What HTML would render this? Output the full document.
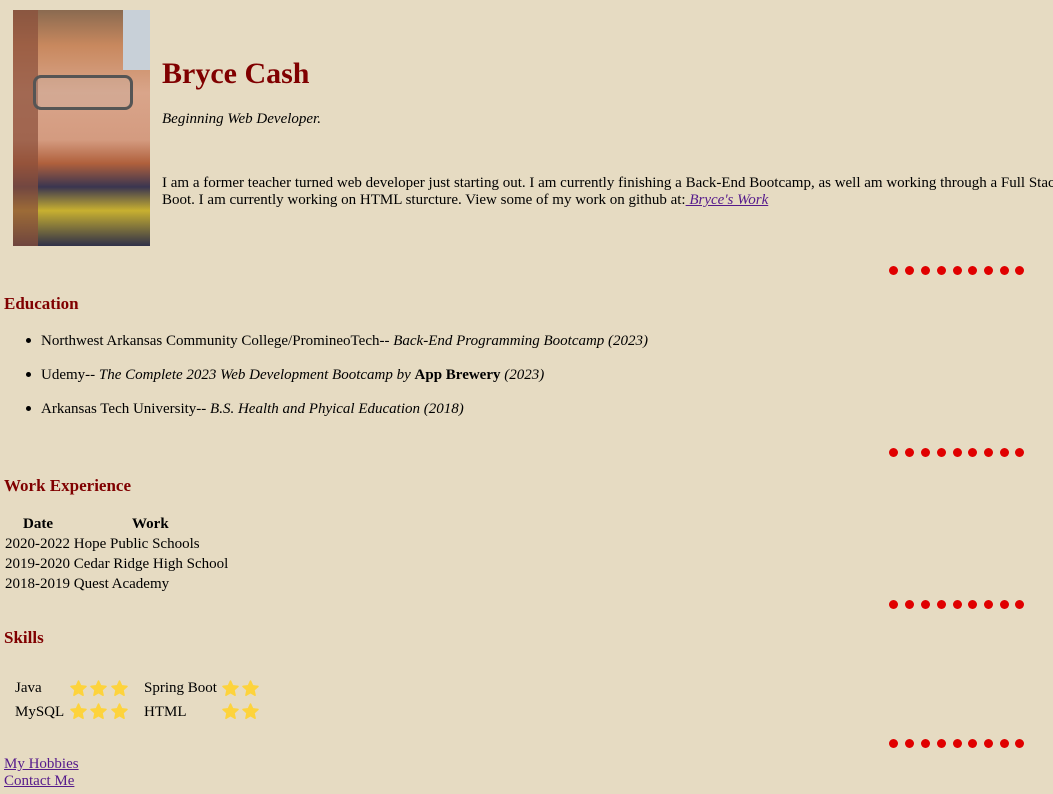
<!DOCTYPE html>
<html style="overflow:hidden"><head><style>
body{margin:0;width:1053px;height:794px;background:#e6dbc2;font-family:"Liberation Serif",serif;font-size:15px;color:#000;position:relative;overflow:hidden}
.a{position:absolute;white-space:nowrap;line-height:17px}
h1{position:absolute;margin:0;left:162px;top:56px;font-size:30px;color:#800000;font-weight:bold;line-height:36px}
h3{position:absolute;margin:0;left:4px;font-size:17px;color:#800000;font-weight:bold;line-height:20px}
.dots{position:absolute;left:889px;width:140px;height:9px}
.dots i{position:absolute;top:0;width:9px;height:9px;border-radius:50%;background:#e00000}
.bul{position:absolute;left:26px;width:5px;height:5px;border-radius:50%;background:#000}
a{color:#551a8b}
svg.s{position:absolute;width:17px;height:17px}
</style></head><body>
<svg width="0" height="0" style="position:absolute"><defs><path id="st" d="M8.5 1 L10.7 5.8 L16 6.4 L12 10 L13.1 15.3 L8.5 12.6 L3.9 15.3 L5 10 L1 6.4 L6.3 5.8 Z" fill="#fdd33c" stroke="#fdd33c" stroke-width="1.5" stroke-linejoin="round"/></defs></svg>
<div style="position:absolute;left:13px;top:10px;width:137px;height:236px;overflow:hidden;background:linear-gradient(180deg,#8a6a50 0%,#c8885e 15%,#d9a58a 35%,#d49b80 55%,#b0603c 65%,#3a3550 75%,#c8b030 85%,#303048 100%)">
<div style="position:absolute;left:0;top:0;width:25px;height:236px;background:#8a4f3a;opacity:.7"></div>
<div style="position:absolute;left:110px;top:0;width:27px;height:60px;background:#c8d0d8"></div>
<div style="position:absolute;left:20px;top:65px;width:100px;height:35px;border:3px solid #555;border-radius:8px;box-sizing:border-box;background:rgba(200,180,170,.3)"></div>
</div>
<h1>Bryce Cash</h1>
<div class="a" style="left:162px;top:111px;font-style:italic">Beginning Web Developer.</div>
<div class="a" style="left:162px;top:175px">I am a former teacher turned web developer just starting out. I am currently finishing a Back-End Bootcamp, as well am working through a Full Stack Spring</div>
<div class="a" style="left:162px;top:192px">Boot. I am currently working on HTML sturcture. View some of my work on github at:<a href="#"><i> Bryce's Work</i></a></div>

<div class="dots" style="top:266px"><i style="left:0"></i><i style="left:16px"></i><i style="left:32px"></i><i style="left:48px"></i><i style="left:64px"></i><i style="left:79px"></i><i style="left:95px"></i><i style="left:111px"></i><i style="left:126px"></i></div>
<h3 style="top:294px">Education</h3>
<div class="bul" style="top:338px"></div><div class="a" style="left:41px;top:333px">Northwest Arkansas Community College/PromineoTech-- <i>Back-End Programming Bootcamp (2023)</i></div>
<div class="bul" style="top:372px"></div><div class="a" style="left:41px;top:367px">Udemy-- <i>The Complete 2023 Web Development Bootcamp by</i> <b>App Brewery</b> <i>(2023)</i></div>
<div class="bul" style="top:406px"></div><div class="a" style="left:41px;top:401px">Arkansas Tech University-- <i>B.S. Health and Phyical Education (2018)</i></div>

<div class="dots" style="top:448px"><i style="left:0"></i><i style="left:16px"></i><i style="left:32px"></i><i style="left:48px"></i><i style="left:64px"></i><i style="left:79px"></i><i style="left:95px"></i><i style="left:111px"></i><i style="left:126px"></i></div>
<h3 style="top:476px">Work Experience</h3>
<div class="a" style="left:23px;top:516px;font-weight:bold">Date</div>
<div class="a" style="left:132px;top:516px;font-weight:bold">Work</div>
<div class="a" style="left:5px;top:536px">2020-2022 Hope Public Schools</div>
<div class="a" style="left:5px;top:556px">2019-2020 Cedar Ridge High School</div>
<div class="a" style="left:5px;top:576px">2018-2019 Quest Academy</div>

<div class="dots" style="top:600px"><i style="left:0"></i><i style="left:16px"></i><i style="left:32px"></i><i style="left:48px"></i><i style="left:64px"></i><i style="left:79px"></i><i style="left:95px"></i><i style="left:111px"></i><i style="left:126px"></i></div>
<h3 style="top:628px">Skills</h3>
<div class="a" style="left:15px;top:680px">Java</div>
<div class="a" style="left:15px;top:704px">MySQL</div>
<div class="a" style="left:144px;top:680px">Spring Boot</div>
<div class="a" style="left:144px;top:704px">HTML</div>
<svg class="s" style="left:70px;top:680px"><use href="#st"/></svg><svg class="s" style="left:90px;top:680px"><use href="#st"/></svg><svg class="s" style="left:111px;top:680px"><use href="#st"/></svg>
<svg class="s" style="left:70px;top:703px"><use href="#st"/></svg><svg class="s" style="left:90px;top:703px"><use href="#st"/></svg><svg class="s" style="left:111px;top:703px"><use href="#st"/></svg>
<svg class="s" style="left:222px;top:680px"><use href="#st"/></svg><svg class="s" style="left:242px;top:680px"><use href="#st"/></svg>
<svg class="s" style="left:222px;top:703px"><use href="#st"/></svg><svg class="s" style="left:242px;top:703px"><use href="#st"/></svg>

<div class="dots" style="top:739px"><i style="left:0"></i><i style="left:16px"></i><i style="left:32px"></i><i style="left:48px"></i><i style="left:64px"></i><i style="left:79px"></i><i style="left:95px"></i><i style="left:111px"></i><i style="left:126px"></i></div>
<div class="a" style="left:4px;top:756px"><a href="#">My Hobbies</a></div>
<div class="a" style="left:4px;top:773px"><a href="#">Contact Me</a></div>
</body></html>
